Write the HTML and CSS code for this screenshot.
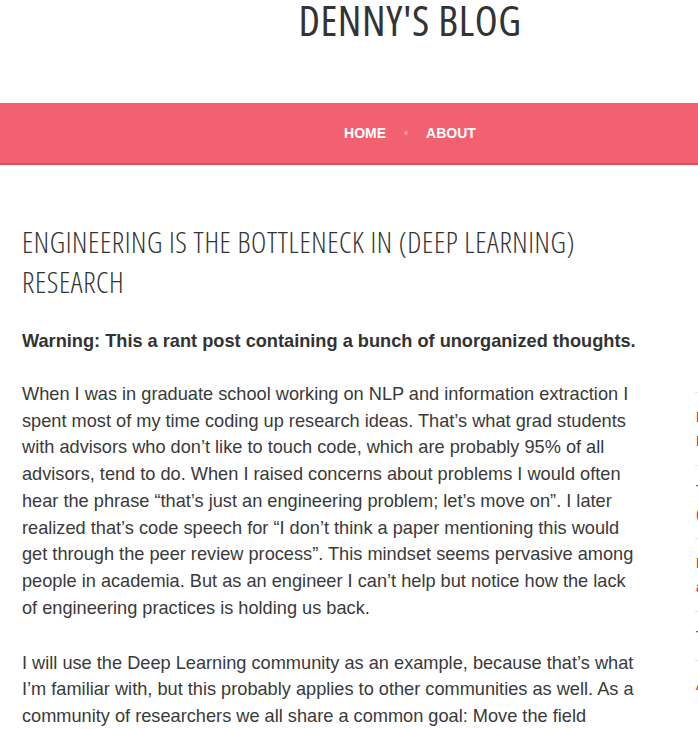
FILE: index.html
```html
<!DOCTYPE html>
<html lang="en">
<head>
<meta charset="utf-8">
<title>Denny's Blog</title>
<link rel="stylesheet" href="styles.css">
</head>
<body>
<div class="page">
  <header class="site-header">
    <h1 class="site-title">DENNY'S BLOG</h1>
  </header>
  <nav class="main-nav">
    <a class="nav-link" href="#">HOME</a>
    <span class="nav-dot"></span>
    <a class="nav-link" href="#">ABOUT</a>
  </nav>
  <div class="content">
    <main class="post">
      <h2 class="post-title">ENGINEERING IS THE BOTTLENECK IN (DEEP LEARNING) RESEARCH</h2>
      <p class="lead"><strong>Warning: This a rant post containing a bunch of unorganized thoughts.</strong></p>
      <p>When I was in graduate school working on NLP and information extraction I spent most of my time coding up research ideas. That’s what grad students with advisors who don’t like to touch code, which are probably 95% of all advisors, tend to do. When I raised concerns about problems I would often hear the phrase “that’s just an engineering problem; let’s move on”. I later realized that’s code speech for “I don’t think a paper mentioning this would get through the peer review process”. This mindset seems pervasive among people in academia. But as an engineer I can’t help but notice how the lack of engineering practices is holding us back.</p>
      <p>I will use the Deep Learning community as an example, because that’s what I’m familiar with, but this probably applies to other communities as well. As a community of researchers we all share a common goal: Move the field forward. Push the state of the art.</p>
    </main>
    <aside class="sidebar">
      <ul class="recent">
        <li><a href="#">Engineering is the Bottleneck in (Deep<br>Learning) Research</a></li>
        <li><a href="#">Tutorial: Reinforcement Learning<br>(with Code, Exercises and Solutions)</a></li>
        <li><a href="#">Deep Learning for Chatbots, Part 2 –<br>an Implementation in Tensorflow</a></li>
        <li><a href="#">The Chatbot Introduction</a></li>
        <li><a href="#">Attention and Memory in Deep Learning</a></li>
      </ul>
    </aside>
  </div>
</div>
</body>
</html>
```
FILE: styles.css
```css
html, body {
  margin: 0;
  padding: 0;
  overflow-x: hidden;
  background: #fff;
}

.page {
  width: 820px;
  font-family: "Liberation Sans", Arial, sans-serif;
  color: #3a3a3a;
}

.site-header {
  height: 103px;
  display: flex;
  justify-content: center;
}

.site-title {
  margin: 0;
  font-family: "Open Sans", sans-serif;
  font-stretch: 75%;
  font-weight: 400;
  font-size: 42px;
  line-height: 40px;
  letter-spacing: 0.6px;
  color: #333;
}

.main-nav {
  height: 60px;
  background: #f2616f;
  border-bottom: 2px solid #d9505e;
  display: flex;
  justify-content: center;
  align-items: center;
  gap: 18px;
}

.nav-link {
  color: #fff;
  text-decoration: none;
  font-weight: bold;
  font-size: 14px;
}

.nav-dot {
  width: 4px;
  height: 4px;
  border-radius: 50%;
  background: #f89aa4;
}

.content {
  display: flex;
  padding-left: 22px;
  gap: 50px;
}

.post {
  width: 623px;
  flex: none;
  padding-top: 57px;
}

.post-title {
  margin: 0 0 26px;
  font-family: "Open Sans", sans-serif;
  font-stretch: 75%;
  font-weight: 300;
  font-size: 29px;
  line-height: 40px;
  letter-spacing: 0.6px;
  color: #333;
}

.post p {
  margin: 0 0 28px;
  font-size: 18.2px;
  line-height: 26.75px;
}

.post p.lead {
  margin-bottom: 26px;
}

.post .lead strong {
  color: #333;
}

.sidebar {
  flex: none;
  width: 250px;
  padding-top: 227px;
}

.recent {
  list-style: none;
  margin: 0;
  padding: 0;
}

.recent li {
  border-top: 1px solid #e6e6e6;
  padding: 12px 0 12px 1px;
  font-size: 14px;
  line-height: 24px;
}

.recent a {
  color: #e3132c;
  text-decoration: none;
}
```
